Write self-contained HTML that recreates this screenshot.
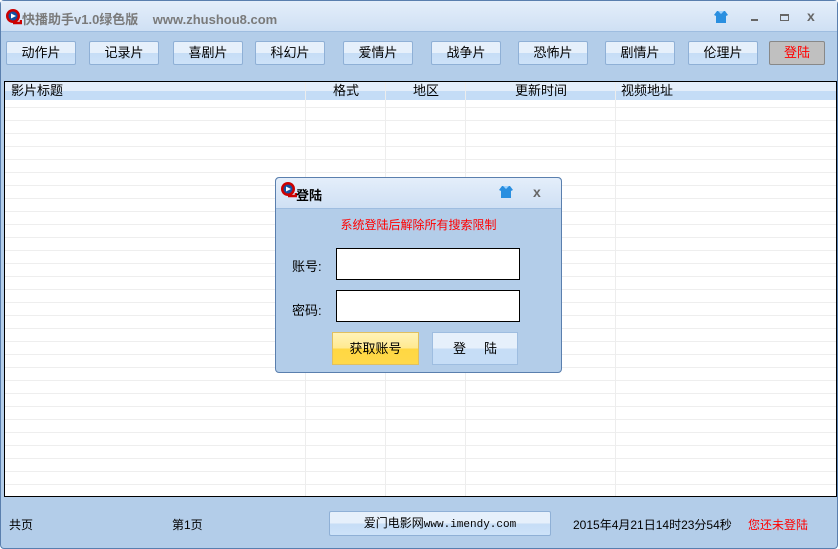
<!DOCTYPE html>
<html><head><meta charset="utf-8"><style>
*{margin:0;padding:0;box-sizing:border-box}
body{width:840px;height:549px;overflow:hidden;background:#fff;font-family:"Liberation Sans","Noto Sans CJK SC",sans-serif;font-size:12px;color:#000;position:relative}
.win{position:absolute;left:0;top:0;width:838px;height:549px;background:#b3cde9;border:1px solid #5a7fae;border-radius:4px}
.title{position:absolute;left:0;top:0;width:836px;height:31px;background:linear-gradient(#e4eefa,#cfe0f4);border-bottom:1px solid #9ebde0}
.ttext{position:absolute;left:21px;top:8px;font-weight:bold;color:#7a7a7a;font-size:13px}
.btn{position:absolute;top:40px;width:70px;height:24px;border:1px solid #8fb0d6;border-radius:2px;background:linear-gradient(#e6f0fb 0,#e6f0fb 50%,#c6ddf6 50%,#cde2f8 100%);text-align:center;line-height:22px;font-size:13px}
.list{position:absolute;left:3px;top:80px;width:833px;height:416px;border:1px solid #000;background:#fff repeating-linear-gradient(transparent 0,transparent 12px,#eeeeee 12px,#eeeeee 13px)}
.hdr{position:absolute;left:0;top:0;width:831px;height:18px;background:linear-gradient(#e4eefa 50%,#c4dcf6 50%);font-size:13px}
.hdr span{position:absolute;top:0px;line-height:18px}
.col{position:absolute;top:0;width:1px;height:414px;background:#ededed}
.dlg{position:absolute;left:275px;top:177px;width:287px;height:196px;background:#b3cde9;border:1px solid #5a7fae;border-radius:4px}
.dt{position:absolute;left:0;top:0;width:285px;height:31px;background:linear-gradient(#e4eefa,#cfe0f4);border-bottom:1px solid #9ebde0;border-radius:4px 4px 0 0}
.inp{position:absolute;left:60px;width:184px;height:32px;background:#fff;border:1px solid #000}
</style></head><body>
<div class="win">
<div class="title">
<svg style="position:absolute;left:3px;top:7px" width="18" height="18"><circle cx="9" cy="8" r="7" fill="#c00"/><circle cx="9" cy="8" r="4.5" fill="#1450a0"/><path d="M7 5.5 L12 8 L7 10.5Z" fill="#fff"/><path d="M9 15 L17 15 L17 12" stroke="#c00" stroke-width="2.5" fill="none"/></svg>
<div class="ttext">快播助手v1.0绿色版&nbsp;&nbsp;&nbsp;&nbsp;www.zhushou8.com</div>
<svg style="position:absolute;left:712px;top:8px" width="16" height="16"><path d="M4 2 L12 2 L15 6 L13 7 L13 14 L3 14 L3 7 L1 6Z" fill="#2a8fe0"/><path d="M5 2 L11 2 L8 5Z" fill="#9fd3ff"/></svg>
<div style="position:absolute;left:750px;top:18px;width:7px;height:2px;background:#666"></div>
<div style="position:absolute;left:779px;top:13px;width:9px;height:7px;border:1px solid #666;border-top-width:2px"></div>
<div style="position:absolute;left:806px;top:7px;font-size:14px;color:#666;font-weight:bold">x</div>
</div>
<div class="btn" style="left:5px">动作片</div>
<div class="btn" style="left:88px">记录片</div>
<div class="btn" style="left:172px">喜剧片</div>
<div class="btn" style="left:254px">科幻片</div>
<div class="btn" style="left:342px">爱情片</div>
<div class="btn" style="left:430px">战争片</div>
<div class="btn" style="left:517px">恐怖片</div>
<div class="btn" style="left:604px">剧情片</div>
<div class="btn" style="left:687px">伦理片</div>
<div class="btn" style="left:768px;width:56px;background:#c0c0c0;border-color:#888;color:#f00">登陆</div>
<div class="list">
<div class="hdr"><span style="left:6px">影片标题</span><span style="left:328px">格式</span><span style="left:408px">地区</span><span style="left:510px">更新时间</span><span style="left:616px">视频地址</span></div>
<div class="col" style="left:300px"></div><div class="col" style="left:380px"></div><div class="col" style="left:460px"></div><div class="col" style="left:610px"></div>
</div>
<div style="position:absolute;left:8px;top:515px">共页</div>
<div style="position:absolute;left:171px;top:515px">第1页</div>
<div class="btn" style="left:328px;top:510px;width:222px;height:25px;font-size:12px">爱门电影网<span style="font-family:'Liberation Mono',monospace;font-size:11px">www.imendy.com</span></div>
<div style="position:absolute;left:572px;top:515px;font-size:12px">2015年4月21日14时23分54秒</div>
<div style="position:absolute;left:747px;top:515px;color:#f00">您还未登陆</div>
</div>
<div class="dlg">
<div class="dt">
<svg style="position:absolute;left:3px;top:3px" width="18" height="18"><circle cx="9" cy="8" r="7" fill="#c00"/><circle cx="9" cy="8" r="4.5" fill="#1450a0"/><path d="M7 5.5 L12 8 L7 10.5Z" fill="#fff"/><path d="M9 15 L17 15 L17 12" stroke="#c00" stroke-width="2.5" fill="none"/></svg>
<div style="position:absolute;left:20px;top:7px;font-weight:bold;font-size:13px">登陆</div>
<svg style="position:absolute;left:222px;top:6px" width="16" height="16"><path d="M4 2 L12 2 L15 6 L13 7 L13 14 L3 14 L3 7 L1 6Z" fill="#2a8fe0"/><path d="M5 2 L11 2 L8 5Z" fill="#9fd3ff"/></svg>
<div style="position:absolute;left:257px;top:6px;font-size:14px;color:#666;font-weight:bold">x</div>
</div>
<div style="position:absolute;left:0;width:285px;top:38px;text-align:center;color:#f00;font-size:12px">系统登陆后解除所有搜索限制</div>
<div style="position:absolute;left:16px;top:78px;font-size:13px">账号:</div>
<div class="inp" style="top:70px"></div>
<div style="position:absolute;left:16px;top:122px;font-size:13px">密码:</div>
<div class="inp" style="top:112px"></div>
<div style="position:absolute;left:56px;top:154px;width:87px;height:33px;border:1px solid #e0c060;background:linear-gradient(#fff3b8 0,#ffe98f 50%,#ffd742 50%,#ffd94a 100%);text-align:center;line-height:31px;font-size:13px">获取账号</div>
<div style="position:absolute;left:156px;top:154px;width:86px;height:33px;border:1px solid #9ebde0;background:linear-gradient(#e6f0fb 50%,#c6ddf6 50%);text-align:center;line-height:31px;font-size:13px">登&nbsp;&nbsp;&nbsp;&nbsp;&nbsp;陆</div>
</div>
</body></html>
